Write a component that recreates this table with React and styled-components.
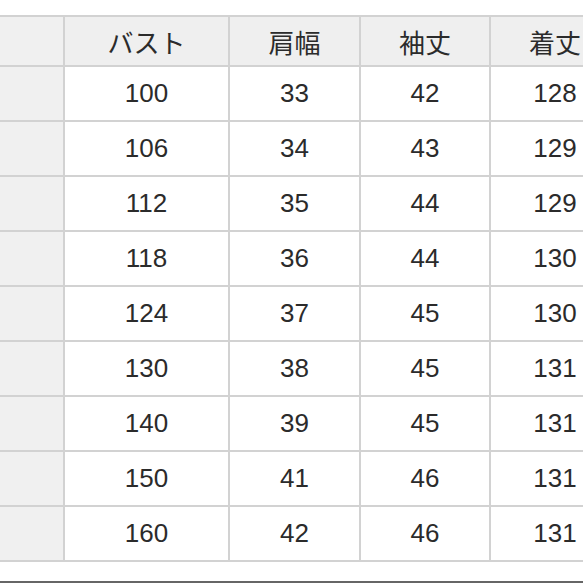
import React from 'react';
import styled, { createGlobalStyle } from 'styled-components';

const GlobalStyle = createGlobalStyle`
  html, body {
    margin: 0;
    padding: 0;
    background: #fff;
    overflow: hidden;
  }
`;

const Page = styled.div`
  width: 583px;
  height: 583px;
  overflow: hidden;
  padding-top: 15px;
  box-sizing: border-box;
`;

const SizeGrid = styled.div`
  display: grid;
  grid-template-columns: 63px 163px 129px 128px 128px;
  grid-template-rows: 48px repeat(9, 53px);
  gap: 2px;
  padding: 2px 0;
  width: max-content;
  background: #d2d2d2;
`;

const Cell = styled.div`
  display: flex;
  align-items: center;
  justify-content: center;
  background: ${(p) => (p.$head ? '#efefef' : '#fff')};
  color: #2b2b2b;
  font-family: ${(p) =>
    p.$head
      ? '"Noto Sans CJK JP", "Noto Sans", sans-serif'
      : '"Liberation Sans", Arial, sans-serif'};
  font-size: 26px;
  font-weight: 400;
`;

const LabelCell = styled.div`
  background: #f0f0f0;
`;

const Rule = styled.div`
  margin-top: 19px;
  height: 2px;
  background: #666;
`;

const headers = ['バスト', '肩幅', '袖丈', '着丈'];

const rows = [
  [100, 33, 42, 128],
  [106, 34, 43, 129],
  [112, 35, 44, 129],
  [118, 36, 44, 130],
  [124, 37, 45, 130],
  [130, 38, 45, 131],
  [140, 39, 45, 131],
  [150, 41, 46, 131],
  [160, 42, 46, 131],
];

export default function App() {
  return (
    <Page>
      <GlobalStyle />
      <SizeGrid>
        <LabelCell />
        {headers.map((h) => (
          <Cell key={h} $head>
            {h}
          </Cell>
        ))}
        {rows.map((r, i) => (
          <React.Fragment key={i}>
            <LabelCell />
            {r.map((v, j) => (
              <Cell key={j}>{v}</Cell>
            ))}
          </React.Fragment>
        ))}
      </SizeGrid>
      <Rule />
    </Page>
  );
}
